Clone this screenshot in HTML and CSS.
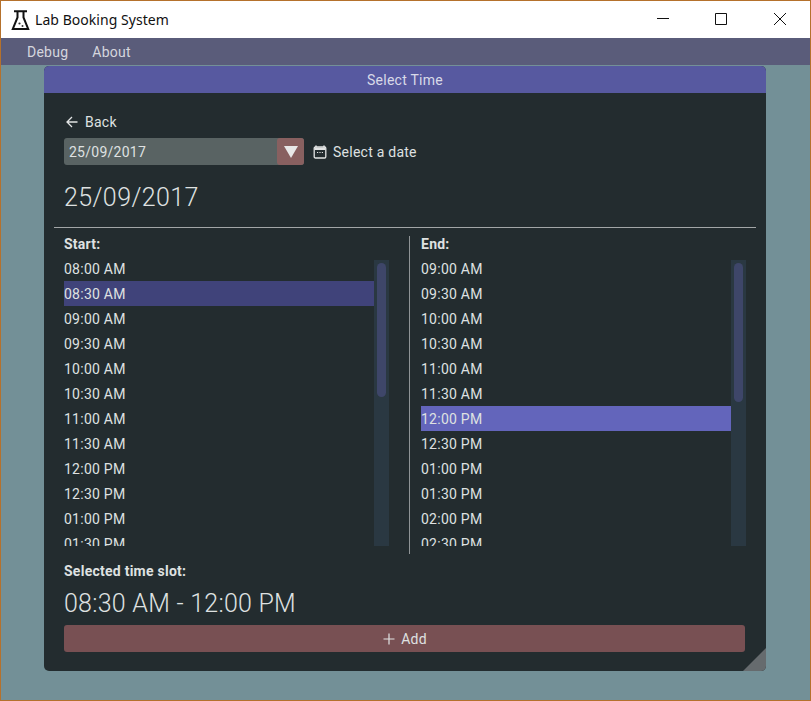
FILE: index.html
```html
<!DOCTYPE html>
<html lang="en">
<head>
  <meta charset="UTF-8">
  <title>Lab Booking System</title>
  <link rel="stylesheet" href="styles.css">
</head>
<body>

  <div class="venster">
    <div class="titelbalk">
      <svg class="logo" width="20" height="20" viewBox="0 0 20 20">
        <path d="M3 1.200h13M6.500 1.200v6.300L1.800 18.900h15.400L12.500 7.500V1.200" fill="none" stroke="#111" stroke-width="2"/>
        <circle cx="8.500" cy="13.500" r="1.100" fill="#333"/>
        <circle cx="11.500" cy="16" r="1" fill="#333"/>
      </svg>
      <span class="titel">Lab Booking System</span>
      <div class="knoppen">
        <svg width="12" height="12" viewBox="0 0 12 12"><path d="M0 5.500h12" stroke="#111" fill="none"/></svg>
        <svg width="12" height="12" viewBox="0 0 12 12"><path d="M.5.500h11v11H.5z" stroke="#111" fill="none"/></svg>
        <svg width="12" height="12" viewBox="0 0 12 12"><path d="M0 0l12 12M12 0L0 12" stroke="#111" fill="none"/></svg>
      </div>
    </div>

    <div class="menu">
      <span>Debug</span>
      <span>About</span>
    </div>

    <div class="inhoud">
      <div class="kaart">
        <div class="kaart-kop">Select Time</div>

        <div class="boven">
          <div class="terug">
            <svg width="14" height="14" viewBox="0 0 14 14"><path d="M12.500 7h-10M7 2L2 7l5 5" fill="none" stroke="#e2e4e4" stroke-width="1.300"/></svg>
            <span>Back</span>
          </div>
          <div class="datum-rij">
            <div class="datum-veld">
              <span class="datum-waarde">25/09/2017</span>
              <span class="datum-knop"><svg width="14" height="12" viewBox="0 0 14 12"><path d="M0 0h14L7 12z" fill="#e8e8e8"/></svg></span>
            </div>
            <div class="datum-link">
              <svg width="14" height="14" viewBox="0 0 14 14">
                <path d="M3 .500v2M11 .500v2" stroke="#e2e4e4" stroke-width="1.500"/>
                <rect x="1.200" y="2" width="11.600" height="11" rx="1.200" fill="none" stroke="#e2e4e4" stroke-width="1.300"/>
                <path d="M1.500 2.500h11v2.500h-11z" fill="#e2e4e4"/>
                <path d="M4 7.500h1.200M6.400 7.500h1.200M8.800 7.500H10" stroke="#e2e4e4"/>
              </svg>
              <span>Select a date</span>
            </div>
          </div>
          <div class="datum-groot">25/09/2017</div>
        </div>

        <hr class="lijn">

        <div class="kolommen">
          <div class="kolom">
            <div class="kolom-kop">Start:</div>
            <div class="lijst-vak">
              <div class="lijst">
                <div class="tijd">08:00 AM</div>
                <div class="tijd gekozen-donker">08:30 AM</div>
                <div class="tijd">09:00 AM</div>
                <div class="tijd">09:30 AM</div>
                <div class="tijd">10:00 AM</div>
                <div class="tijd">10:30 AM</div>
                <div class="tijd">11:00 AM</div>
                <div class="tijd">11:30 AM</div>
                <div class="tijd">12:00 PM</div>
                <div class="tijd">12:30 PM</div>
                <div class="tijd">01:00 PM</div>
                <div class="tijd">01:30 PM</div>
              </div>
              <div class="scrollbalk"><div class="duim duim-start"></div></div>
            </div>
          </div>

          <div class="scheiding"></div>

          <div class="kolom">
            <div class="kolom-kop">End:</div>
            <div class="lijst-vak">
              <div class="lijst">
                <div class="tijd">09:00 AM</div>
                <div class="tijd">09:30 AM</div>
                <div class="tijd">10:00 AM</div>
                <div class="tijd">10:30 AM</div>
                <div class="tijd">11:00 AM</div>
                <div class="tijd">11:30 AM</div>
                <div class="tijd gekozen">12:00 PM</div>
                <div class="tijd">12:30 PM</div>
                <div class="tijd">01:00 PM</div>
                <div class="tijd">01:30 PM</div>
                <div class="tijd">02:00 PM</div>
                <div class="tijd">02:30 PM</div>
              </div>
              <div class="scrollbalk"><div class="duim duim-eind"></div></div>
            </div>
          </div>
        </div>

        <div class="onder">
          <div class="slot-kop">Selected time slot:</div>
          <div class="slot-tijd">08:30 AM - 12:00 PM</div>
          <div class="toevoegen">
            <svg width="12" height="12" viewBox="0 0 12 12"><path d="M6 .500v11M.500 6h11" stroke="#e2e4e4" stroke-width="1.200" fill="none"/></svg>
            <span>Add</span>
          </div>
        </div>

        <div class="greep"></div>
      </div>
    </div>
  </div>

</body>
</html>
```

FILE: styles.css
```css
* {
  box-sizing: border-box;
}

html, body {
  height: 100%;
}

body {
  margin: 0;
  font-family: Roboto, "Liberation Sans", sans-serif;
  font-size: 14px;
  letter-spacing: 0.25px;
  color: #dfe1e1;
  overflow: hidden;
}

.venster {
  height: 701px;
  display: flex;
  flex-direction: column;
  border: 1px solid #b5712c;
}

.titelbalk {
  height: 37px;
  flex: none;
  display: flex;
  align-items: center;
  background: #fff;
  padding-left: 10px;
  color: #111;
}

.logo {
  margin-right: 4px;
}

.titel {
  font-family: "Noto Sans", "Open Sans", sans-serif;
  font-size: 14px;
  letter-spacing: 0.05px;
}

.knoppen {
  margin-left: auto;
  margin-bottom: 1px;
  display: flex;
  gap: 46px;
  padding-right: 24px;
}

.knoppen svg:last-child {
  margin-left: 1px;
}

.menu {
  height: 27px;
  flex: none;
  display: flex;
  align-items: center;
  gap: 24px;
  padding-left: 26px;
  background: #5a5c7a;
  color: #d5d6de;
}

.inhoud {
  flex: 1;
  background: #739097;
  padding: 1px 44px 29px 43px;
}

.kaart {
  position: relative;
  height: 605px;
  background: #232c2f;
  border-radius: 5px;
  overflow: hidden;
}

.kaart-kop {
  height: 27px;
  line-height: 28px;
  text-align: center;
  background: #5759a0;
  color: #d9dae8;
}

.boven {
  padding: 20px 20px 0;
}

.terug {
  height: 18px;
  display: flex;
  align-items: center;
  gap: 6px;
  padding-left: 1px;
}

.datum-rij {
  margin-top: 7px;
  display: flex;
  align-items: center;
  gap: 9px;
}

.datum-veld {
  width: 240px;
  height: 27px;
  display: flex;
  align-items: center;
  justify-content: space-between;
  background: #596363;
  border-radius: 3px;
  padding-left: 5px;
}

.datum-knop {
  width: 27px;
  height: 27px;
  display: flex;
  align-items: center;
  justify-content: center;
  background: #886060;
  border-radius: 3px;
}

.datum-link {
  display: flex;
  align-items: center;
  gap: 6px;
}

.datum-groot {
  margin-top: 16px;
  font-size: 25px;
  font-weight: 300;
  letter-spacing: 0.4px;
  line-height: 33px;
}

.lijn {
  margin: 13px 10px 0;
  border: 0;
  border-top: 1px solid #a2a6a7;
}

.kolommen {
  margin-top: 8px;
  padding: 0 20px;
  display: flex;
  height: 318px;
}

.kolom {
  width: 325px;
  flex: none;
}

.kolom-kop {
  height: 20px;
  line-height: 16px;
  font-weight: 700;
}

.scheiding {
  width: 1px;
  margin: 0 11px 0 20px;
  background: #8f9496;
}

.lijst-vak {
  display: flex;
  height: 290px;
}

.lijst {
  flex: 1;
  overflow: hidden;
}

.tijd {
  height: 25px;
  line-height: 26px;
}

.gekozen-donker {
  background: #40437a;
}

.gekozen {
  background: #6365bb;
}

.scrollbalk {
  width: 15px;
  flex: none;
  margin-top: 4px;
  padding: 3px;
  background: #2a3842;
}

.duim {
  background: #3e4669;
  border-radius: 5px;
}

.duim-start {
  height: 134px;
}

.duim-eind {
  height: 139px;
}

.onder {
  padding: 8px 21px 0 20px;
}

.slot-kop {
  font-weight: 700;
  line-height: 18px;
}

.slot-tijd {
  margin-top: 7px;
  font-size: 25px;
  font-weight: 300;
  line-height: 33px;
}

.toevoegen {
  margin-top: 5px;
  height: 27px;
  display: flex;
  align-items: center;
  justify-content: center;
  gap: 6px;
  background: #785053;
  border-radius: 3px;
  padding-left: 1px;
}

.greep {
  position: absolute;
  right: 0;
  bottom: 0;
  width: 23px;
  height: 23px;
  background: #666b6e;
  clip-path: polygon(100% 0, 100% 100%, 0 100%);
}
```
